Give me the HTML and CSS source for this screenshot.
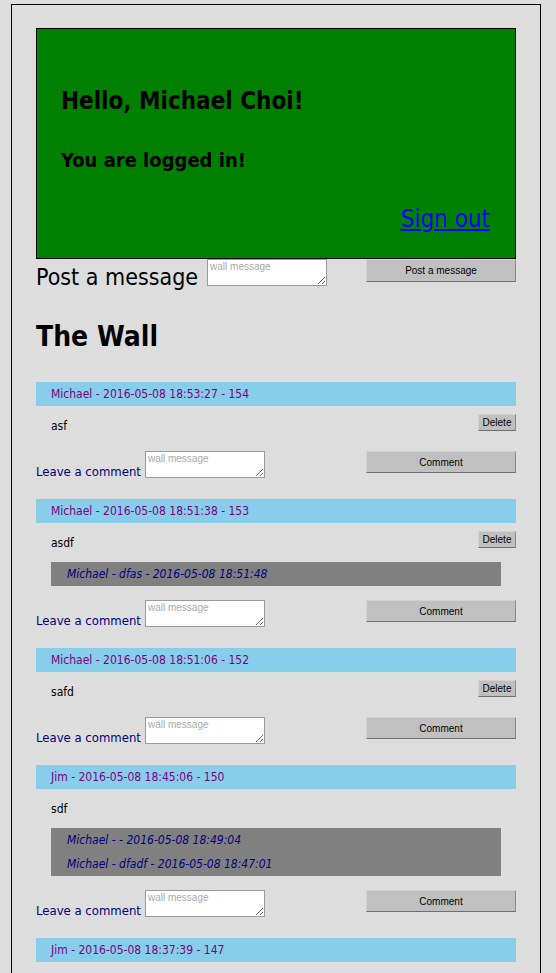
FILE: index.html
```html
<!DOCTYPE html>
<html>
<head>
<meta charset="utf-8">
<title>The Wall</title>
<link rel="stylesheet" href="styles.css">
</head>
<body>
<div class="page">
  <div class="welcome">
    <h1 class="hello">Hello, Michael Choi!</h1>
    <h2 class="logged">You are logged in!</h2>
    <div class="signout-row"><a href="#" class="signout">Sign out</a></div>
  </div>
  <form class="post-form">
    <label class="post-label">Post a message</label>
    <textarea class="txt post-input" placeholder="wall message"></textarea>
    <button type="button" class="btn btn-post">Post a message</button>
  </form>
  <h2 class="wall-title">The Wall</h2>

  <div class="message">
    <div class="msg-head">Michael - 2016-05-08 18:53:27 - 154</div>
    <div class="msg-body">
      <p class="msg-text">asf</p>
      <button type="button" class="btn btn-delete">Delete</button>
    </div>
    <form class="comment-form">
      <label class="comment-label">Leave a comment</label>
      <textarea class="txt comment-input" placeholder="wall message"></textarea>
      <button type="button" class="btn btn-comment">Comment</button>
    </form>
  </div>

  <div class="message">
    <div class="msg-head">Michael - 2016-05-08 18:51:38 - 153</div>
    <div class="msg-body">
      <p class="msg-text">asdf</p>
      <button type="button" class="btn btn-delete">Delete</button>
    </div>
    <div class="comments">
      <div class="comment">Michael - dfas - 2016-05-08 18:51:48</div>
    </div>
    <form class="comment-form">
      <label class="comment-label">Leave a comment</label>
      <textarea class="txt comment-input" placeholder="wall message"></textarea>
      <button type="button" class="btn btn-comment">Comment</button>
    </form>
  </div>

  <div class="message">
    <div class="msg-head">Michael - 2016-05-08 18:51:06 - 152</div>
    <div class="msg-body">
      <p class="msg-text">safd</p>
      <button type="button" class="btn btn-delete">Delete</button>
    </div>
    <form class="comment-form">
      <label class="comment-label">Leave a comment</label>
      <textarea class="txt comment-input" placeholder="wall message"></textarea>
      <button type="button" class="btn btn-comment">Comment</button>
    </form>
  </div>

  <div class="message">
    <div class="msg-head">Jim - 2016-05-08 18:45:06 - 150</div>
    <div class="msg-body">
      <p class="msg-text">sdf</p>
    </div>
    <div class="comments">
      <div class="comment">Michael - - 2016-05-08 18:49:04</div>
      <div class="comment">Michael - dfadf - 2016-05-08 18:47:01</div>
    </div>
    <form class="comment-form">
      <label class="comment-label">Leave a comment</label>
      <textarea class="txt comment-input" placeholder="wall message"></textarea>
      <button type="button" class="btn btn-comment">Comment</button>
    </form>
  </div>

  <div class="message">
    <div class="msg-head">Jim - 2016-05-08 18:37:39 - 147</div>
  </div>
</div>
</body>
</html>
```
FILE: styles.css
```css
* { box-sizing: border-box; }

html, body {
  background: #dddddd;
}

body {
  margin: 0;
  font-family: "DejaVu Sans Condensed", "DejaVu Sans", sans-serif;
  color: #000;
}

.page {
  width: 530px;
  margin: 4px 0 0 11px;
  border: 1px solid #000;
  padding: 23px 24px 60px;
}

.welcome {
  height: 231px;
  background: #008000;
  border: 1px solid #000;
  padding: 58px 25px 0 24px;
}

.hello {
  margin: 0;
  font-size: 24px;
  line-height: 28px;
  font-weight: bold;
}

.logged {
  margin: 33px 0 0;
  font-size: 20px;
  line-height: 24px;
  font-weight: bold;
}

.signout-row {
  margin-top: 33px;
  text-align: right;
  line-height: 28px;
}

.signout {
  font-size: 24px;
  color: #0000ff;
  text-decoration: underline;
}

.post-form {
  display: flex;
  align-items: flex-start;
  margin: 0;
}

.post-label {
  margin-top: 4px;
  font-size: 23px;
  line-height: 28px;
}

.txt {
  display: block;
  margin: 0;
  background: #fff;
  border: 1px solid #9a9a9a;
  padding: 1px 2px;
  font-family: "Liberation Sans", Arial, sans-serif;
  font-size: 10px;
  color: #000;
}

.txt::placeholder {
  color: #a9a9a9;
}

.post-input {
  margin-left: 9px;
  width: 120px;
  height: 27px;
}

.btn {
  display: block;
  margin: 0;
  padding: 0;
  background: #c0c0c0;
  border: 1px solid;
  border-color: #d2d2d2 #8c8c8c #707070 #d2d2d2;
  font-family: "Liberation Sans", Arial, sans-serif;
  font-size: 10px;
  color: #000;
}

.btn-post {
  margin-left: auto;
  width: 150px;
  height: 23px;
}

.wall-title {
  margin: 29px 0 28px;
  font-size: 28px;
  line-height: 34px;
  font-weight: bold;
}

.msg-head {
  height: 24px;
  line-height: 24px;
  padding-left: 15px;
  background: #87ceeb;
  color: #800080;
  font-size: 12px;
}

.msg-body {
  height: 39px;
  display: flex;
  justify-content: space-between;
  align-items: flex-start;
  padding-left: 15px;
}

.msg-text {
  margin: 12px 0 0;
  font-size: 12px;
  line-height: 16px;
}

.btn-delete {
  margin-top: 8px;
  width: 38px;
  height: 17px;
  font-size: 10px;
}

.comments {
  margin: 0 15px 14px;
  background: #808080;
}

.comment {
  height: 24px;
  line-height: 24px;
  padding-left: 16px;
  font-size: 12px;
  font-style: italic;
  color: #000080;
}

.comment-form {
  display: flex;
  align-items: flex-end;
  height: 27px;
  margin: 6px 0 21px;
}

.comment-label {
  margin-bottom: -2px;
  font-size: 13px;
  line-height: 16px;
  color: #000080;
}

.comment-input {
  margin-left: 4px;
  width: 120px;
  height: 27px;
}

.btn-comment {
  align-self: flex-start;
  margin-left: auto;
  width: 150px;
  height: 22px;
}
```
